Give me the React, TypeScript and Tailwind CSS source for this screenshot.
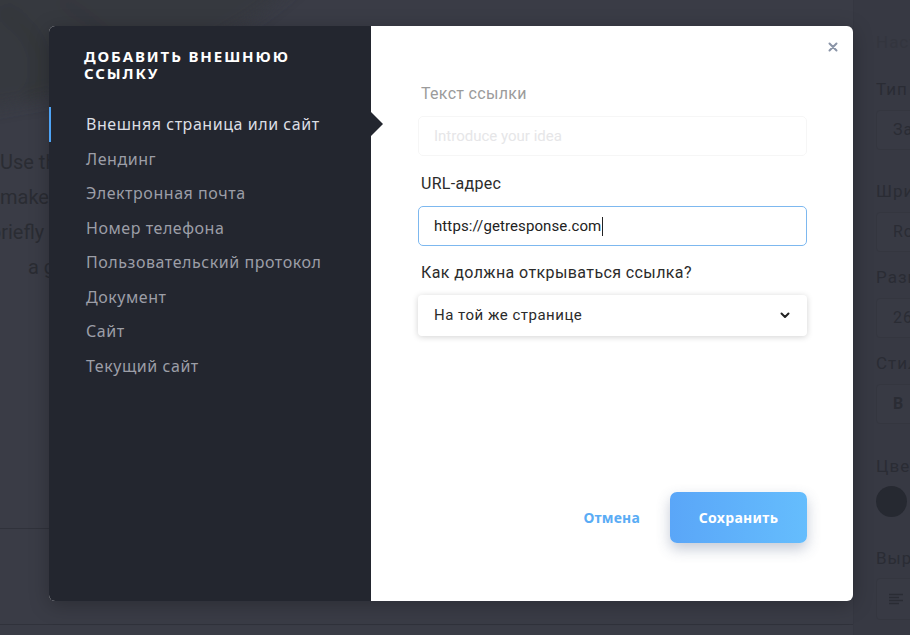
import React from "react";

const menu = [
  "Внешняя страница или сайт",
  "Лендинг",
  "Электронная почта",
  "Номер телефона",
  "Пользовательский протокол",
  "Документ",
  "Сайт",
  "Текущий сайт",
];

function SideField({ label, value, mt }: { label: string; value: React.ReactNode; mt: string }) {
  return (
    <div className={`flex flex-col ${mt}`}>
      <div className="text-[17px] leading-[22px] tracking-[1px] text-[#2a2c34]">{label}</div>
      <div className="mt-[10px] h-[40px] rounded-[4px] border border-[#34363f] bg-[#383a44] pl-[16px] flex items-center text-[16px] text-[#2a2c34] tracking-[1px]">
        {value}
      </div>
    </div>
  );
}

export default function App() {
  return (
    <div
      className="relative w-[910px] h-[635px] overflow-hidden bg-[#3a3c46]"
      style={{ fontFamily: "Roboto, 'Noto Sans', sans-serif" }}
    >
      {/* underlying page (dimmed) */}
      <div className="flex h-full">
        <div className="relative flex-1 flex flex-col">
          <div className="h-[130px] relative overflow-hidden">
            <svg width="320" height="130" viewBox="0 0 320 130" className="absolute left-0 top-0">
              <defs>
                <filter id="blur" x="-20%" y="-20%" width="140%" height="140%">
                  <feGaussianBlur stdDeviation="8" />
                </filter>
              </defs>
              <g filter="url(#blur)" opacity="0.7">
                <path d="M-20 -20 H300 C260 20 200 50 150 70 C90 90 40 100 -20 110 Z" fill="#35383d" />
                <path d="M0 10 C40 30 50 70 30 100" stroke="#2e3133" strokeWidth="14" fill="none" />
                <path d="M60 0 C110 30 130 60 120 90" stroke="#303335" strokeWidth="10" fill="none" />
              </g>
            </svg>
          </div>
          <div className="flex flex-col text-[20px] leading-[35px] text-[#2a2c33] whitespace-nowrap mt-[15px]">
            <div className="ml-[0px]">Use the text block to tell a story</div>
            <div className="ml-[0px]">makes your idea clear and</div>
            <div className="-ml-[10px]">briefly explains why it is</div>
            <div className="ml-[28px]">a good one</div>
          </div>
          <div className="mt-auto mb-[106px] border-t border-[#30323b]" />
          <div className="absolute left-0 right-0 bottom-[10px] border-t border-[#30323b]" />
        </div>
        <div className="w-[57px] shrink-0 border-l border-[#353741] bg-[#373943] pl-[22px] pt-[31px] whitespace-nowrap overflow-hidden">
          <div className="w-[200px] flex flex-col">
            <div className="text-[17px] leading-[22px] tracking-[1px] text-[#33353e]">Настройки</div>
            <SideField mt="mt-[25px]" label="Тип" value="Заголовок" />
            <SideField mt="mt-[30px]" label="Шрифт" value="Roboto" />
            <SideField mt="mt-[14px]" label="Размер" value="26" />
            <SideField mt="mt-[14px]" label="Стиль" value={<span className="font-bold">B</span>} />
            <div className="mt-[31px] text-[17px] leading-[22px] tracking-[1px] text-[#2a2c34]">Цвет</div>
            <div className="mt-[9px] w-[31px] h-[31px] rounded-full bg-[#262931]" />
            <div className="mt-[30px] text-[17px] leading-[22px] tracking-[1px] text-[#2a2c34]">Выравнивание</div>
            <div className="mt-[9px] h-[42px] rounded-[4px] border border-[#34363f] bg-[#383a44] pl-[12px] flex items-center">
              <svg width="14" height="12" viewBox="0 0 14 12" stroke="#2a2c34" strokeWidth="1.3">
                <path d="M0 1.5H14M0 4.5H10M0 7.5H14M0 10.5H10" />
              </svg>
            </div>
          </div>
        </div>
      </div>

      {/* modal overlay */}
      <div className="absolute inset-0 pl-[49px] pt-[26px]">
        <div className="relative flex w-[804px] h-[575px] rounded-[6px] overflow-hidden bg-white shadow-[0_4px_20px_rgba(0,0,0,0.25)]">
          {/* left panel */}
          <div
            className="relative w-[322px] shrink-0 bg-[#23262f] pt-[22px]"
            style={{ fontFamily: "'Noto Sans', 'Open Sans', sans-serif" }}
          >
            <div className="pl-[35px] text-[15px] leading-[17px] font-bold tracking-[1.9px] text-white uppercase">
              Добавить внешнюю
              <br />
              ссылку
            </div>
            <div className="mt-[25px] flex flex-col">
              {menu.map((m, i) => (
                <div
                  key={m}
                  className={`relative h-[34.5px] pl-[37px] flex items-center text-[16px] tracking-[0.55px] ${
                    i === 0 ? "text-[#dcdee4]" : "text-[#9c9ea7]"
                  }`}
                >
                  {i === 0 && <div className="absolute left-0 top-0 bottom-0 w-[2px] bg-[#4ea3f5]" />}
                  {i === 0 && (
                    <div className="absolute right-[-12px] top-1/2 -translate-y-1/2 w-0 h-0 border-y-[12px] border-y-transparent border-l-[12px] border-l-[#23262f]" />
                  )}
                  {m}
                </div>
              ))}
            </div>
          </div>

          {/* right panel */}
          <div className="relative flex-1 flex flex-col pl-[47px] pr-[46px] pt-[58px] pb-[58px]">
            <button className="absolute right-[15px] top-[16px] w-[10px] h-[10px] flex items-center justify-center">
              <svg width="10" height="10" viewBox="0 0 10 10" stroke="#8a94a7" strokeWidth="2" strokeLinecap="round">
                <path d="M1.5 1.5L8.5 8.5M8.5 1.5L1.5 8.5" />
              </svg>
            </button>
            <div className="pl-[3px] text-[16px] leading-[20px] tracking-[0.3px] text-[#9b9b9b]">Текст ссылки</div>
            <div className="mt-[12px] h-[40px] rounded-[5px] border border-[#f6f6f6] pl-[15px] flex items-center text-[15px] text-[#e6e6e8]">
              Introduce your idea
            </div>
            <div className="mt-[18px] pl-[3px] text-[16px] leading-[20px] tracking-[0.3px] text-[#2b2b2b]">URL-адрес</div>
            <div className="mt-[12px] h-[40px] rounded-[5px] border border-[#7db8ef] pl-[15px] flex items-center text-[15px] tracking-[0.1px] text-[#222]">
              https://getresponse.com
              <span className="inline-block w-[1px] h-[19px] bg-[#222] ml-[1px]" />
            </div>
            <div className="mt-[17px] pl-[3px] text-[16px] leading-[20px] tracking-[0.4px] text-[#2b2b2b]">
              Как должна открываться ссылка?
            </div>
            <div className="mt-[12px] h-[41px] rounded-[4px] bg-white shadow-[0_1px_6px_rgba(0,0,0,0.18)] pl-[16px] pr-[17px] flex items-center justify-between text-[15px] tracking-[0.5px] text-[#2b2b2b]">
              <span>На той же странице</span>
              <svg width="10" height="7" viewBox="0 0 10 7" fill="none" stroke="#222" strokeWidth="2" strokeLinecap="round" strokeLinejoin="round">
                <path d="M1.5 1.5L5 5L8.5 1.5" />
              </svg>
            </div>
            <div
              className="mt-auto flex items-center justify-end gap-[30px]"
              style={{ fontFamily: "'Noto Sans', 'Open Sans', sans-serif" }}
            >
              <button className="text-[14px] font-bold text-[#5aacf5] tracking-[0.2px]">Отмена</button>
              <button className="w-[137px] h-[51px] rounded-[7px] bg-gradient-to-r from-[#5aa6f8] to-[#65bdfd] text-white text-[14px] font-bold tracking-[0.3px] shadow-[0_6px_14px_rgba(60,80,120,0.3)]">
                Сохранить
              </button>
            </div>
          </div>
        </div>
      </div>
    </div>
  );
}
